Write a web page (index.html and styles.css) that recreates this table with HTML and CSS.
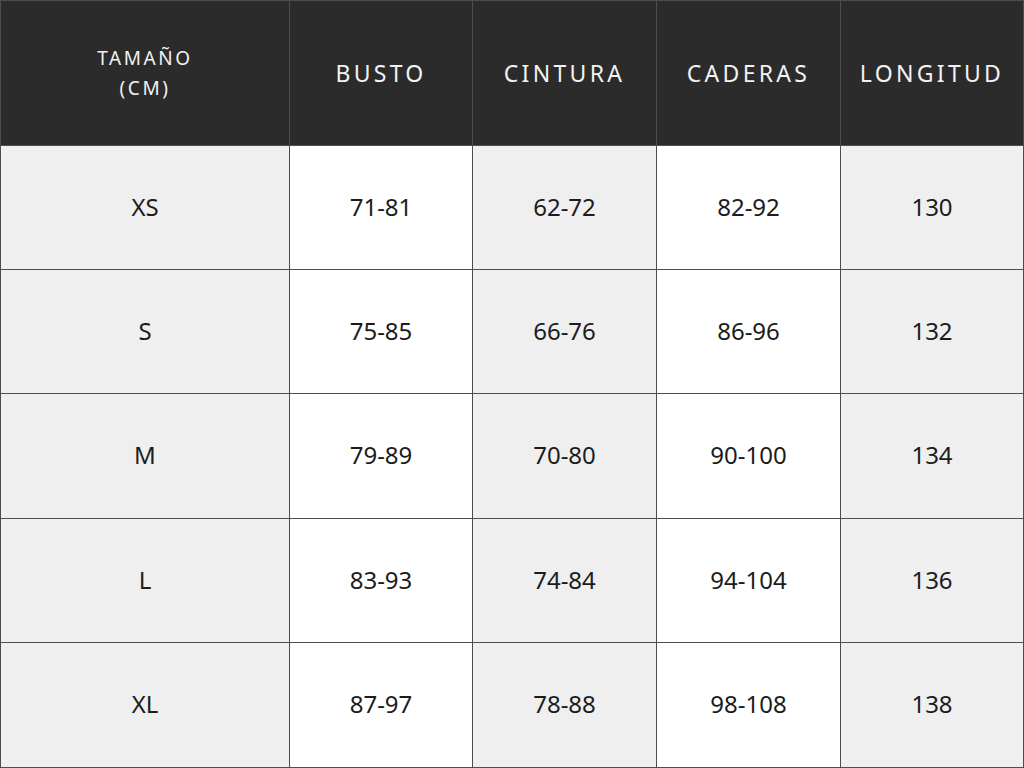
FILE: index.html
```html
<!DOCTYPE html>
<html lang="es">
<head>
<meta charset="utf-8">
<title>Tabla de tallas</title>
<link rel="stylesheet" href="styles.css">
</head>
<body>
<div class="chart">
  <div class="cell head size">TAMAÑO<br>(CM)</div>
  <div class="cell head">BUSTO</div>
  <div class="cell head">CINTURA</div>
  <div class="cell head">CADERAS</div>
  <div class="cell head">LONGITUD</div>

  <div class="cell gray">XS</div>
  <div class="cell white">71-81</div>
  <div class="cell gray">62-72</div>
  <div class="cell white">82-92</div>
  <div class="cell gray">130</div>

  <div class="cell gray">S</div>
  <div class="cell white">75-85</div>
  <div class="cell gray">66-76</div>
  <div class="cell white">86-96</div>
  <div class="cell gray">132</div>

  <div class="cell gray">M</div>
  <div class="cell white">79-89</div>
  <div class="cell gray">70-80</div>
  <div class="cell white">90-100</div>
  <div class="cell gray">134</div>

  <div class="cell gray">L</div>
  <div class="cell white">83-93</div>
  <div class="cell gray">74-84</div>
  <div class="cell white">94-104</div>
  <div class="cell gray">136</div>

  <div class="cell gray">XL</div>
  <div class="cell white">87-97</div>
  <div class="cell gray">78-88</div>
  <div class="cell white">98-108</div>
  <div class="cell gray">138</div>
</div>
</body>
</html>
```
FILE: styles.css
```css
html, body {
  margin: 0;
  padding: 0;
  background: #ffffff;
}
.chart {
  width: 1024px;
  height: 768px;
  box-sizing: border-box;
  display: grid;
  grid-template-columns: 288px 182px 183px 183px 182px;
  grid-template-rows: 144px 123px 123px 124px 123px 124px;
  gap: 1px;
  padding: 1px;
  background: #4d4d4d;
  font-family: "Noto Sans", "Open Sans", sans-serif;
}
.cell {
  display: flex;
  align-items: center;
  justify-content: center;
  text-align: center;
  font-size: 24px;
  line-height: 1;
  padding-bottom: 2px;
  color: #1c1c1c;
}
.head {
  background: #2b2b2b;
  color: #f2f2f2;
  font-size: 23px;
  letter-spacing: 3.3px;
  font-weight: 400;
  padding-bottom: 0;
}
.head.size {
  font-size: 19px;
  line-height: 30px;
  letter-spacing: 2.6px;
}
.gray {
  background: #efefef;
}
.white {
  background: #ffffff;
}
```
